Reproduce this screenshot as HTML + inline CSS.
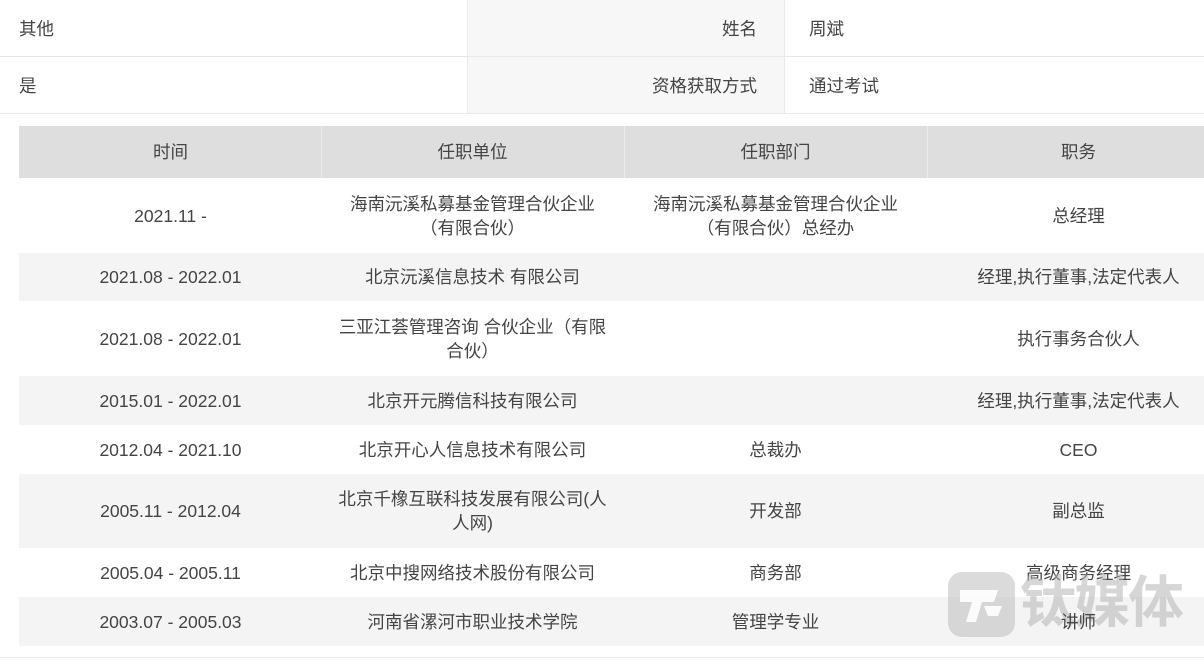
<!DOCTYPE html><html><head><meta charset="utf-8"><style>
body{margin:0;width:1204px;height:660px;position:relative;background:#fff;font-family:"Liberation Sans","Noto Sans CJK SC",sans-serif;font-size:17.5px;color:#444;overflow:hidden}
.a{position:absolute}
.c{position:absolute;display:flex;align-items:center;justify-content:center;text-align:center;line-height:24px;width:303px}
</style></head><body>
<div class="a" style="left:467px;top:0;width:316px;height:113px;background:#f7f7f7;border-left:1px solid #ebebeb;border-right:1px solid #ebebeb"></div>
<div class="a" style="left:0;top:56px;width:1204px;height:1px;background:#e8e8e8"></div>
<div class="a" style="left:0;top:113px;width:1204px;height:1px;background:#e8e8e8"></div>
<div class="a" style="left:19px;top:16px">其他</div>
<div class="a" style="right:447px;top:16px">姓名</div>
<div class="a" style="left:809px;top:16px">周斌</div>
<div class="a" style="left:19px;top:73px">是</div>
<div class="a" style="right:447px;top:73px">资格获取方式</div>
<div class="a" style="left:809px;top:73px">通过考试</div>

<div class="a" style="left:19px;top:126px;width:1185px;height:52px;background:#dedede"></div>
<div class="a" style="left:321px;top:126px;width:1px;height:52px;background:#ececec"></div>
<div class="a" style="left:624px;top:126px;width:1px;height:52px;background:#ececec"></div>
<div class="a" style="left:927px;top:126px;width:1px;height:52px;background:#ececec"></div>
<div class="a" style="left:19px;top:253px;width:1185px;height:48px;background:#f4f4f4"></div>
<div class="a" style="left:19px;top:376px;width:1185px;height:49px;background:#f4f4f4"></div>
<div class="a" style="left:19px;top:474px;width:1185px;height:74px;background:#f4f4f4"></div>
<div class="a" style="left:19px;top:597px;width:1185px;height:49px;background:#f4f4f4"></div>
<div class="a" style="left:0;top:657px;width:1204px;height:1px;background:#e8e8e8"></div>

<div class="c" style="left:19px;top:126px;height:52px">时间</div>
<div class="c" style="left:321px;top:126px;height:52px">任职单位</div>
<div class="c" style="left:624px;top:126px;height:52px">任职部门</div>
<div class="c" style="left:927px;top:126px;height:52px">职务</div>

<div class="c" style="left:19px;top:179px;height:74px">2021.11 -</div>
<div class="c" style="left:321px;top:179px;height:74px">海南沅溪私募基金管理合伙企业<br>（有限合伙）</div>
<div class="c" style="left:624px;top:179px;height:74px">海南沅溪私募基金管理合伙企业<br>（有限合伙）总经办</div>
<div class="c" style="left:927px;top:179px;height:74px">总经理</div>

<div class="c" style="left:19px;top:253px;height:48px">2021.08 - 2022.01</div>
<div class="c" style="left:321px;top:253px;height:48px">北京沅溪信息技术 有限公司</div>
<div class="c" style="left:927px;top:253px;height:48px">经理,执行董事,法定代表人</div>

<div class="c" style="left:19px;top:301px;height:75px">2021.08 - 2022.01</div>
<div class="c" style="left:321px;top:301px;height:75px">三亚江荟管理咨询 合伙企业（有限<br>合伙）</div>
<div class="c" style="left:927px;top:301px;height:75px">执行事务合伙人</div>

<div class="c" style="left:19px;top:376px;height:49px">2015.01 - 2022.01</div>
<div class="c" style="left:321px;top:376px;height:49px">北京开元腾信科技有限公司</div>
<div class="c" style="left:927px;top:376px;height:49px">经理,执行董事,法定代表人</div>

<div class="c" style="left:19px;top:425px;height:49px">2012.04 - 2021.10</div>
<div class="c" style="left:321px;top:425px;height:49px">北京开心人信息技术有限公司</div>
<div class="c" style="left:624px;top:425px;height:49px">总裁办</div>
<div class="c" style="left:927px;top:425px;height:49px">CEO</div>

<div class="c" style="left:19px;top:474px;height:74px">2005.11 - 2012.04</div>
<div class="c" style="left:321px;top:474px;height:74px">北京千橡互联科技发展有限公司(人<br>人网)</div>
<div class="c" style="left:624px;top:474px;height:74px">开发部</div>
<div class="c" style="left:927px;top:474px;height:74px">副总监</div>

<div class="c" style="left:19px;top:548px;height:49px">2005.04 - 2005.11</div>
<div class="c" style="left:321px;top:548px;height:49px">北京中搜网络技术股份有限公司</div>
<div class="c" style="left:624px;top:548px;height:49px">商务部</div>
<div class="c" style="left:927px;top:548px;height:49px">高级商务经理</div>

<div class="c" style="left:19px;top:597px;height:49px">2003.07 - 2005.03</div>
<div class="c" style="left:321px;top:597px;height:49px">河南省漯河市职业技术学院</div>
<div class="c" style="left:624px;top:597px;height:49px">管理学专业</div>

<div class="a" style="left:948px;top:572px;width:67px;height:65px;border-radius:14px;background:rgba(190,190,190,0.55)"></div>
<svg class="a" style="left:948px;top:572px" width="67" height="65" viewBox="0 0 67 65"><path d="M12 18H50L46 30H34L28 50H18L24 30H12Z" fill="#fff" opacity="0.9"/><path d="M36 34H54L50 44H40Z" fill="#fff" opacity="0.9"/></svg>
<div class="a" style="left:1020px;top:568px;font-size:56px;font-weight:bold;color:rgba(180,180,180,0.55);line-height:70px;letter-spacing:-2px">钛媒体</div>
<div class="c" style="left:927px;top:597px;height:49px">讲师</div>
</body></html>
